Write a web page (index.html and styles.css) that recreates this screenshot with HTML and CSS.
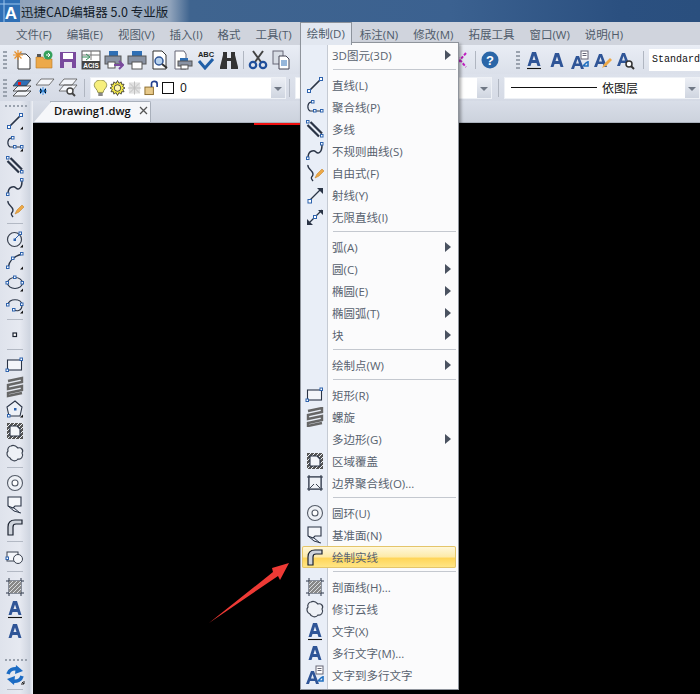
FILE: index.html
```html
<!DOCTYPE html>
<html lang="zh">
<head>
<meta charset="utf-8">
<title>迅捷CAD编辑器</title>
<link rel="stylesheet" href="styles.css">
</head>
<body>
<svg class="defs" width="0" height="0">
  <defs>
    <symbol id="tri" viewBox="0 0 20 20"><path d="M18 15.500V18.500H15Z" fill="#111"/></symbol>
    <symbol id="line" viewBox="0 0 20 20"><path d="M4 16 16 4" stroke="#2a3446" stroke-width="1.700"/><rect x="2.500" y="14.500" width="3" height="3" fill="#fff" stroke="#2d62ad"/><rect x="14.500" y="2.500" width="3" height="3" fill="#fff" stroke="#2d62ad"/></symbol>
    <symbol id="pline" viewBox="0 0 20 20"><path d="M6 5C2 6 2 12 5 14H16" fill="none" stroke="#2a3446" stroke-width="1.200"/><rect x="6.500" y="3.500" width="2.500" height="2.500" fill="#fff" stroke="#2d62ad"/><rect x="8.500" y="12.500" width="2.500" height="2.500" fill="#fff" stroke="#2d62ad"/><rect x="15.500" y="12.500" width="2.500" height="2.500" fill="#fff" stroke="#2d62ad"/></symbol>
    <symbol id="mline" viewBox="0 0 20 20"><path d="M2.500 6 14 17.500M5.500 3 17 14.500" stroke="#2a3446" stroke-width="2.200"/><rect x="1.500" y="1.500" width="2.500" height="2.500" fill="#fff" stroke="#2d62ad"/><rect x="15.500" y="15.500" width="2.500" height="2.500" fill="#fff" stroke="#2d62ad"/></symbol>
    <symbol id="spline" viewBox="0 0 20 20"><path d="M3 17C3 9 9 9 11 11S17 12 17 4" fill="none" stroke="#2a3446" stroke-width="1.500"/><rect x="1.500" y="16" width="2.500" height="2.500" fill="#fff" stroke="#2d62ad"/><rect x="15.500" y="1.500" width="2.500" height="2.500" fill="#fff" stroke="#2d62ad"/></symbol>
    <symbol id="free" viewBox="0 0 20 20"><path d="M3 2C2 6 8 7 8 11S4 13 8 18" fill="none" stroke="#2a3446" stroke-width="1.400"/><path d="M10 15 12 11 17 6 19 8 14 13Z" fill="#eda846" stroke="#c8862a" stroke-width=".6"/></symbol>
    <symbol id="ray" viewBox="0 0 20 20"><path d="M5 15 15 5" stroke="#2a3446" stroke-width="1.300"/><path d="M12 3H18V9Z" fill="#2a3446"/><rect x="3" y="14.500" width="3.500" height="3.500" fill="#fff" stroke="#2d62ad"/></symbol>
    <symbol id="xline" viewBox="0 0 20 20"><path d="M3 17 17 3" stroke="#2a3446" stroke-width="1.200"/><path d="M13 3H18V8ZM2 12V18H8Z" fill="#2a3446"/><rect x="8.500" y="8.500" width="3" height="3" fill="#fff" stroke="#2d62ad"/></symbol>
    <symbol id="circle" viewBox="0 0 20 20"><circle cx="9.500" cy="10.500" r="7" fill="#e8edf5" stroke="#3a4250" stroke-width="1.200"/><path d="M9.500 10.500 15 5" stroke="#2d62ad"/><rect x="8.500" y="9.500" width="2.500" height="2.500" fill="#2d62ad"/><rect x="14" y="3" width="2.500" height="2.500" fill="#fff" stroke="#2d62ad"/></symbol>
    <symbol id="arc" viewBox="0 0 20 20"><path d="M3 17C4 9 9 5 17 3" fill="none" stroke="#2a3446" stroke-width="1.300"/><rect x="1.500" y="15" width="2.500" height="2.500" fill="#fff" stroke="#2d62ad"/><rect x="6.500" y="6" width="2.500" height="2.500" fill="#fff" stroke="#2d62ad"/><rect x="15.500" y="1.500" width="2.500" height="2.500" fill="#fff" stroke="#2d62ad"/></symbol>
    <symbol id="ell" viewBox="0 0 20 20"><ellipse cx="10" cy="10" rx="7.500" ry="5.500" fill="none" stroke="#2a3446" stroke-width="1.200"/><rect x="1" y="8.500" width="2.500" height="2.500" fill="#fff" stroke="#2d62ad"/><rect x="16" y="8.500" width="2.500" height="2.500" fill="#fff" stroke="#2d62ad"/><rect x="8.500" y="3" width="2.500" height="2.500" fill="#fff" stroke="#2d62ad"/></symbol>
    <symbol id="ellarc" viewBox="0 0 20 20"><path d="M3 10C3 3 17 3 17 10S11 16 9 15" fill="none" stroke="#2a3446" stroke-width="1.200"/><rect x="1.500" y="8.500" width="2.500" height="2.500" fill="#fff" stroke="#2d62ad"/><rect x="15.500" y="8" width="2.500" height="2.500" fill="#fff" stroke="#2d62ad"/><rect x="7.500" y="13.500" width="2.500" height="2.500" fill="#fff" stroke="#2d62ad"/></symbol>
    <symbol id="point" viewBox="0 0 20 20"><rect x="8" y="8" width="3.500" height="3.500" fill="#fff" stroke="#1b2230" stroke-width="1.200"/></symbol>
    <symbol id="rect" viewBox="0 0 20 20"><rect x="2.500" y="5" width="14" height="10" fill="#f4f6fa" stroke="#2a3446" stroke-width="1.100"/><rect x="1" y="14" width="2.500" height="2.500" fill="#fff" stroke="#2d62ad"/><rect x="15" y="3" width="2.500" height="2.500" fill="#fff" stroke="#2d62ad"/></symbol>
    <symbol id="helix" viewBox="0 0 20 20"><path d="M3 4 17 1V5L3 8V12L17 9V13L3 16V19L17 16" fill="none" stroke="#666" stroke-width="2.400"/></symbol>
    <symbol id="poly" viewBox="0 0 20 20"><path d="M10 2 17 8 15 17H4L2 8Z" fill="#edf0f6" stroke="#2a3446" stroke-width="1.100"/><rect x="2.500" y="15.500" width="2.500" height="2.500" fill="#fff" stroke="#2d62ad"/><rect x="9" y="9" width="2.500" height="2.500" fill="#2d62ad"/></symbol>
    <symbol id="wipe" viewBox="0 0 20 20"><rect x="2" y="2" width="16" height="16" fill="#555"/><path d="M2 6 6 2M2 10 10 2M2 14 14 2M2 18 18 2M6 18 18 6M10 18 18 10M14 18 18 14" stroke="#eef1f6" stroke-width="1"/><path d="M5 5H12L15 8V15H5Z" fill="#f4f6fa" stroke="#2a3446" stroke-width="1.100"/></symbol>
    <symbol id="bound" viewBox="0 0 20 20"><path d="M4 2V18M16 2V18M2 4H18M2 16H18" stroke="#3a4250" stroke-width="1.100"/><rect x="4" y="4" width="12" height="12" fill="#eef1f6" stroke="#2a3446" stroke-width="1.100"/><path d="M5 15 9 11M15 15 11 11" stroke="#3a4250"/></symbol>
    <symbol id="cloud" viewBox="0 0 20 20"><path d="M6 3C9 1 12 4 13 5 16 4 19 7 17 10 19 13 16 17 13 16 11 19 6 18 5 15 2 14 1 10 3 8 2 6 4 3 6 3Z" fill="#eef1f6" stroke="#3a4250" stroke-width="1.200"/></symbol>
    <symbol id="donut" viewBox="0 0 20 20"><circle cx="10" cy="10" r="7.500" fill="#eef1f6" stroke="#555c68" stroke-width="1.100"/><circle cx="10" cy="10" r="3" fill="#fff" stroke="#555c68" stroke-width="1.100"/></symbol>
    <symbol id="plane" viewBox="0 0 20 20"><path d="M3 2H16V11H10L8 13 3 11Z" fill="#f4f6fa" stroke="#2a3446" stroke-width="1.100"/><path d="M3 11 9 16 16 18M9 13 15 18" fill="none" stroke="#2a3446"/></symbol>
    <symbol id="solid" viewBox="0 0 20 20"><path d="M3 18V10C3 5 6 3 10 3H17V7H11C9 7 8 8 8 10V18Z" fill="#cfd4dc" stroke="#1b2230" stroke-width="1.200"/></symbol>
    <symbol id="region" viewBox="0 0 20 20"><rect x="2" y="5" width="11" height="9" fill="#f4f6fa" stroke="#3a4250"/><circle cx="13" cy="12" r="4.500" fill="#f4f6fa" stroke="#3a4250"/><rect x="1" y="10" width="2.500" height="2.500" fill="#fff" stroke="#2d62ad"/></symbol>
    <symbol id="hatch" viewBox="0 0 20 20"><path d="M4 1V19M16 1V19M1 4H19M1 16H19" stroke="#2a3446"/><rect x="4" y="4" width="12" height="12" fill="#888"/><path d="M4 8 8 4M4 12 12 4M4 16 16 4M8 16 16 8M12 16 16 12" stroke="#eef1f6" stroke-width=".8"/></symbol>
    <symbol id="au" viewBox="0 0 20 20"><path d="M3.500 16 8 2H12L16.500 16H13.500L12.500 13H7.500L6.500 16ZM8.500 10H11.500L10 5.500Z" fill="#2f5597"/><path d="M3 18.500H17" stroke="#111" stroke-width="1.100"/></symbol>
    <symbol id="a" viewBox="0 0 20 20"><path d="M3.500 17 8 3H12L16.500 17H13.500L12.500 14H7.500L6.500 17ZM8.500 11H11.500L10 6.500Z" fill="#2f5597"/></symbol>
    <symbol id="am" viewBox="0 0 20 20"><path d="M1 19 6 6H9L14 19H11L10 16H5L4 19ZM6 13.500H9L7.500 9Z" fill="#2f5597"/><rect x="11" y="1" width="7" height="8" fill="#fff" stroke="#667"/><path d="M12.500 3.500H16.500M12.500 5.500H16.500" stroke="#667"/><path d="M18 11V16H13M17 12 13 16" fill="none" stroke="#1f6fc0" stroke-width="1.600"/></symbol>
    <symbol id="apen" viewBox="0 0 20 20"><path d="M1 17 6 4H9L14 17H11L10 14H5L4 17ZM6 11.500H9L7.500 7Z" fill="#2f5597"/><path d="M9 18 11 14 17 8 19 10 13 16Z" fill="#eda846"/></symbol>
    <symbol id="afind" viewBox="0 0 20 20"><path d="M1 16 6 3H9L14 16H11L10 13H5L4 16ZM6 10.500H9L7.500 6Z" fill="#2f5597"/><circle cx="13" cy="14" r="3" fill="#fff" stroke="#333" stroke-width="1.500"/><path d="M15 16 18 19" stroke="#333" stroke-width="2"/></symbol>
    <symbol id="sync" viewBox="0 0 20 20"><path d="M3 9C4 5 8 3 13 4" fill="none" stroke="#1c6cc4" stroke-width="3.600"/><path d="M11 0 18 6 10 9Z" fill="#1c6cc4"/><path d="M17 11C16 15 12 17 7 16" fill="none" stroke="#1c6cc4" stroke-width="3.600"/><path d="M9 20 2 14 10 11Z" fill="#1c6cc4"/><path d="M17 17 19 19M16 19H19V16" stroke="#222" fill="none"/></symbol>
    <symbol id="new" viewBox="0 0 20 20"><path d="M6 4H14L18 8V19H6Z" fill="#fff" stroke="#333"/><path d="M6 0V10M1 5H11M2.500 1.500 9.500 8.500M9.500 1.500 2.500 8.500" stroke="#e8912d" stroke-width="1.200"/></symbol>
    <symbol id="open" viewBox="0 0 20 20"><path d="M1 7H8L9 9H17V18H1Z" fill="#eca94a" stroke="#b87a25" stroke-width=".6"/><path d="M2 4H6V7H2Z" fill="#555"/><circle cx="13" cy="5" r="4.500" fill="#35a05c"/><path d="M11 5H15M13 3 15 5 13 7" stroke="#fff" fill="none"/></symbol>
    <symbol id="save" viewBox="0 0 20 20"><rect x="2" y="2" width="16" height="16" fill="#7a4a9e"/><rect x="5" y="3" width="10" height="6" fill="#fff"/><rect x="6" y="12" width="8" height="6" fill="#e6e0ee"/></symbol>
    <symbol id="acis" viewBox="0 0 20 20"><rect x="1" y="1" width="18" height="18" fill="#fff" stroke="#555"/><path d="M1 5H19M10 1V10" stroke="#777"/><path d="M1 7H8M5 4 9 7 5 10" stroke="#2e8b57" fill="none"/><rect x="1" y="11" width="18" height="8" fill="#444"/><text x="10" y="17.500" font-family="Liberation Sans" font-size="6.500" font-weight="700" text-anchor="middle" fill="#fff">ACIS</text></symbol>
    <symbol id="printto" viewBox="0 0 20 20"><rect x="5" y="1" width="9" height="5" fill="#2f6fb5"/><rect x="1" y="6" width="16" height="8" fill="#8a93a3" stroke="#555"/><rect x="4" y="12" width="7" height="6" fill="#fff" stroke="#555"/><path d="M10 15H19M15 11 19 15 15 19" fill="none" stroke="#7a4a9e" stroke-width="2"/></symbol>
    <symbol id="print" viewBox="0 0 20 20"><rect x="5" y="1" width="10" height="5" fill="#2f6fb5"/><rect x="1" y="6" width="18" height="8" fill="#8a93a3" stroke="#555"/><rect x="5" y="12" width="10" height="7" fill="#fff" stroke="#555"/></symbol>
    <symbol id="preview" viewBox="0 0 20 20"><path d="M3 1H12L16 5V19H3Z" fill="#fff" stroke="#333"/><circle cx="9" cy="11" r="4" fill="#b9d3ee" stroke="#2f5597" stroke-width="1.500"/><path d="M12 14 17 18" stroke="#333" stroke-width="2"/></symbol>
    <symbol id="plot" viewBox="0 0 20 20"><path d="M2 1H11L13 4V19H2Z" fill="#fff" stroke="#667"/><rect x="7" y="8" width="8" height="3" fill="#2f6fb5"/><rect x="5" y="11" width="14" height="5" fill="#8a93a3" stroke="#555"/><rect x="8" y="15" width="7" height="4" fill="#fff" stroke="#555"/></symbol>
    <symbol id="check" viewBox="0 0 20 20"><text x="10" y="7" font-family="Liberation Sans" font-size="7.500" font-weight="700" text-anchor="middle" fill="#222">ABC</text><path d="M3 11 9 18 17 9" fill="none" stroke="#1f5fa8" stroke-width="3"/></symbol>
    <symbol id="binoc" viewBox="0 0 20 20"><path d="M4 2H8V8H12V2H16V5L19 17V19H12V11H8V19H1V17L4 5Z" fill="#333"/></symbol>
    <symbol id="cut" viewBox="0 0 20 20"><path d="M5 1 13 12M15 1 7 12" stroke="#444" stroke-width="2"/><circle cx="5" cy="15" r="3.200" fill="none" stroke="#1f4f9c" stroke-width="2.200"/><circle cx="15" cy="15" r="3.200" fill="none" stroke="#1f4f9c" stroke-width="2.200"/></symbol>
    <symbol id="copy" viewBox="0 0 20 20"><rect x="2" y="1" width="10" height="13" fill="#d8dde5" stroke="#667"/><path d="M8 6H15L18 9V19H8Z" fill="#fff" stroke="#445"/><path d="M10 11H16M10 13H16M10 15H16" stroke="#2f6fb5"/></symbol>
    <symbol id="help" viewBox="0 0 20 20"><circle cx="10" cy="10" r="8.500" fill="#2a66a8"/><text x="10" y="14.500" font-family="Liberation Sans" font-size="13" font-weight="700" text-anchor="middle" fill="#fff">?</text></symbol>
    <symbol id="layer" viewBox="0 0 20 20"><path d="M6 2H19L14 8H1Z" fill="#2f6fb5" stroke="#333" stroke-width=".7"/><rect x="6" y="4" width="3" height="3" fill="#e11"/><path d="M6 8H19L14 13H1ZM6 13H19L14 18H1Z" fill="#f4f6fa" stroke="#333" stroke-width=".8"/></symbol>
    <symbol id="layer2" viewBox="0 0 20 20"><path d="M6 1H19L14 7H1Z" fill="#f4f6fa" stroke="#555" stroke-width=".8"/><path d="M5 10 8 13 5 16M11 10 8 13 11 16M8 9V17M4 13H12" stroke="#3c8fe0"/></symbol>
    <symbol id="layer3" viewBox="0 0 20 20"><path d="M6 1H19L14 7H1ZM6 7H19L14 13H1Z" fill="#f4f6fa" stroke="#555" stroke-width=".8"/><circle cx="12" cy="13" r="3" fill="#fff" stroke="#444" stroke-width="1.400"/><path d="M14 15 17 18" stroke="#444" stroke-width="2"/></symbol>
    <symbol id="bulb" viewBox="0 0 16 18"><path d="M8 0C3.500 0 1 3 1 6 1 9 5 11 5 14H11C11 11 15 9 15 6 15 3 12.500 0 8 0Z" fill="#f7ef7c" stroke="#8b8b44"/><rect x="5.500" y="14.500" width="5" height="3.500" fill="#888"/></symbol>
    <symbol id="sun" viewBox="0 0 16 16"><path d="M8 0 9.500 3 12 1.500 12.300 4 15 4 13.500 6.500 16 8 13.500 9.500 15 12 12.300 12 12 14.500 9.500 13 8 16 6.500 13 4 14.500 3.700 12 1 12 2.500 9.500 0 8 2.500 6.500 1 4 3.700 4 4 1.500 6.500 3Z" fill="#f9ee4a" stroke="#222" stroke-width=".8"/><circle cx="8" cy="8" r="3.500" fill="#fff8b0" stroke="#222" stroke-width=".8"/></symbol>
    <symbol id="freeze" viewBox="0 0 16 16"><rect x="2" y="2" width="12" height="12" fill="#e2e2e2"/><path d="M8 1V15M1 8H15M3 3 13 13M13 3 3 13" stroke="#bdbdbd"/></symbol>
    <symbol id="lock" viewBox="0 0 16 16"><rect x="1" y="7" width="9" height="8" fill="#e7c98a" stroke="#8a6a2a"/><path d="M8 7V3.500C8 0 14 0 14 3.500V7" fill="none" stroke="#23408f" stroke-width="1.800"/></symbol>
    <symbol id="trim" viewBox="0 0 14 20"><path d="M1 3 13 17M13 3 1 17" stroke="#c01fc0" stroke-width="2" stroke-dasharray="3 1.500"/></symbol>
  </defs>
</svg>

<div class="app">
  <header class="titlebar">
    <svg class="logo" viewBox="0 0 20 22"><rect width="20" height="22" fill="#2f6fb5"/><path d="M0 4H20M4 0V22" stroke="#9cc6ee"/><text x="11" y="19" font-family="Liberation Sans" font-size="17" font-weight="700" text-anchor="middle" fill="#fff">A</text></svg>
    <span class="apptitle">迅捷CAD编辑器 5.0 专业版</span>
  </header>

  <nav class="menubar">
    <span>文件(F)</span><span>编辑(E)</span><span>视图(V)</span><span>插入(I)</span><span>格式</span><span>工具(T)</span><span class="open">绘制(D)</span><span>标注(N)</span><span>修改(M)</span><span>拓展工具</span><span>窗口(W)</span><span>说明(H)</span>
  </nav>

  <div class="toolbar tb1">
    <i class="grip"></i>
    <svg class="ti"><use href="#new"/></svg><svg class="ti"><use href="#open"/></svg><svg class="ti"><use href="#save"/></svg><svg class="ti"><use href="#acis"/></svg><svg class="ti"><use href="#printto"/></svg><svg class="ti"><use href="#print"/></svg><svg class="ti"><use href="#preview"/></svg><svg class="ti"><use href="#plot"/></svg><svg class="ti"><use href="#check"/></svg><svg class="ti"><use href="#binoc"/></svg>
    <i class="vsep"></i>
    <svg class="ti"><use href="#cut"/></svg><svg class="ti"><use href="#copy"/></svg>
    <span class="spacer1"></span>
    <svg class="trim"><use href="#trim"/></svg>
    <i class="vsep"></i>
    <svg class="ti"><use href="#help"/></svg>
    <i class="grip gripb"></i>
    <svg class="ti"><use href="#au"/></svg><svg class="ti"><use href="#a"/></svg><svg class="ti"><use href="#am"/></svg><svg class="ti"><use href="#apen"/></svg><svg class="ti"><use href="#afind"/></svg>
    <i class="vsep vsep-last"></i>
    <span class="stylebox">Standard</span>
  </div>

  <div class="toolbar tb2">
    <i class="grip"></i>
    <svg class="ti"><use href="#layer"/></svg><svg class="ti"><use href="#layer2"/></svg><svg class="ti"><use href="#layer3"/></svg>
    <i class="vsep"></i>
    <div class="combo layercombo">
      <svg class="si"><use href="#bulb"/></svg><svg class="si"><use href="#sun"/></svg><svg class="si"><use href="#freeze"/></svg><svg class="si"><use href="#lock"/></svg><b class="swatch"></b><span class="lname">0</span>
      <b class="drop"></b>
    </div>
    <i class="vsep"></i>
    <div class="combo colorcombo"><b class="drop"></b></div>
    <i class="vsep"></i>
    <div class="combo linecombo"><i class="ltline"></i><span class="ltname">依图层</span><b class="drop"></b></div>
  </div>

  <div class="body">
    <aside class="lefttb">
      <div class="lgrip lgrip-top"></div>
      <svg class="li"><use href="#line"/><use href="#tri"/></svg>
      <svg class="li"><use href="#pline"/><use href="#tri"/></svg>
      <svg class="li"><use href="#mline"/></svg>
      <svg class="li"><use href="#spline"/></svg>
      <svg class="li"><use href="#free"/></svg>
      <i class="hsep"></i>
      <svg class="li"><use href="#circle"/><use href="#tri"/></svg>
      <svg class="li"><use href="#arc"/><use href="#tri"/></svg>
      <svg class="li"><use href="#ell"/><use href="#tri"/></svg>
      <svg class="li"><use href="#ellarc"/><use href="#tri"/></svg>
      <i class="hsep"></i>
      <svg class="li"><use href="#point"/></svg>
      <i class="hsep"></i>
      <svg class="li"><use href="#rect"/></svg>
      <svg class="li"><use href="#helix"/></svg>
      <svg class="li"><use href="#poly"/><use href="#tri"/></svg>
      <svg class="li"><use href="#wipe"/></svg>
      <svg class="li"><use href="#cloud"/></svg>
      <i class="hsep"></i>
      <svg class="li"><use href="#donut"/></svg>
      <svg class="li"><use href="#plane"/></svg>
      <svg class="li"><use href="#solid"/></svg>
      <i class="hsep"></i>
      <svg class="li"><use href="#region"/></svg>
      <i class="hsep"></i>
      <svg class="li"><use href="#hatch"/></svg>
      <svg class="li"><use href="#au"/></svg>
      <svg class="li"><use href="#a"/></svg>
      <div class="lgrip lgrip-mid"></div>
      <svg class="li"><use href="#sync"/></svg>
      <i class="hsep"></i>
    </aside>
    <div class="work">
      <div class="tabrow">
        <div class="tab"><span>Drawing1.dwg</span><svg class="tabx" viewBox="0 0 9 9"><path d="M1 1 8 8M8 1 1 8" stroke="#555" stroke-width="1.300"/></svg></div>
      </div>
      <main class="canvas"></main>
    </div>
  </div>

  <i class="redmark"></i>

  <div class="menu">
    <div class="mi sub"><span>3D图元(3D)</span></div>
    <hr>
    <div class="mi"><svg><use href="#line"/></svg><span>直线(L)</span></div>
    <div class="mi"><svg><use href="#pline"/></svg><span>聚合线(P)</span></div>
    <div class="mi"><svg><use href="#mline"/></svg><span>多线</span></div>
    <div class="mi"><svg><use href="#spline"/></svg><span>不规则曲线(S)</span></div>
    <div class="mi"><svg><use href="#free"/></svg><span>自由式(F)</span></div>
    <div class="mi"><svg><use href="#ray"/></svg><span>射线(Y)</span></div>
    <div class="mi"><svg><use href="#xline"/></svg><span>无限直线(I)</span></div>
    <hr>
    <div class="mi sub"><span>弧(A)</span></div>
    <div class="mi sub"><span>圆(C)</span></div>
    <div class="mi sub"><span>椭圆(E)</span></div>
    <div class="mi sub"><span>椭圆弧(T)</span></div>
    <div class="mi sub"><span>块</span></div>
    <hr>
    <div class="mi sub"><span>绘制点(W)</span></div>
    <hr>
    <div class="mi"><svg><use href="#rect"/></svg><span>矩形(R)</span></div>
    <div class="mi"><svg><use href="#helix"/></svg><span>螺旋</span></div>
    <div class="mi sub"><span>多边形(G)</span></div>
    <div class="mi"><svg><use href="#wipe"/></svg><span>区域覆盖</span></div>
    <div class="mi"><svg><use href="#bound"/></svg><span>边界聚合线(O)...</span></div>
    <hr>
    <div class="mi"><svg><use href="#donut"/></svg><span>圆环(U)</span></div>
    <div class="mi"><svg><use href="#plane"/></svg><span>基准面(N)</span></div>
    <div class="mi active"><svg><use href="#solid"/></svg><span>绘制实线</span></div>
    <hr>
    <div class="mi"><svg><use href="#hatch"/></svg><span>剖面线(H)...</span></div>
    <div class="mi"><svg><use href="#cloud"/></svg><span>修订云线</span></div>
    <div class="mi"><svg><use href="#au"/></svg><span>文字(X)</span></div>
    <div class="mi"><svg><use href="#a"/></svg><span>多行文字(M)...</span></div>
    <div class="mi"><svg><use href="#am"/></svg><span>文字到多行文字</span></div>
  </div>

  <svg class="callout" viewBox="0 0 90 70"><path d="M0 68 64 17 63 13 80 8 71 25 69 21Z" fill="#ee3a35"/></svg>
</div>
</body>
</html>
```

FILE: styles.css
```css
* { box-sizing: border-box; }
html, body { margin: 0; padding: 0; }
body { width: 700px; height: 694px; overflow: hidden; font-family: "Open Sans", "Noto Sans CJK SC", sans-serif; font-size: 12px; color: #4d5866; }
.defs { position: absolute; }
.app { position: relative; width: 700px; height: 694px; overflow: hidden; background: #d3d8e2; display: flex; flex-direction: column; }

.titlebar { height: 22px; display: flex; align-items: center; background: linear-gradient(90deg, #8c9fb8 0, #a9b6c8 100px, #90a3bb 170px, #3f648f 190px, #3b6190 450px, #2b5080 620px, #2a4f7e 700px); flex: none; }
.logo { width: 20px; height: 22px; flex: none; }
.apptitle { margin-left: 1px; font-family: "Noto Sans CJK SC", sans-serif; font-size: 12.500px; color: #111a26; white-space: nowrap; }

.menubar { height: 23px; flex: none; display: flex; align-items: center; gap: 15px; padding-left: 16px; background: #d0d4dd; font-size: 11.500px; color: #4f5b6a; white-space: nowrap; }
.menubar .open { position: relative; z-index: 2; margin: 0 -7px; padding: 0 7px; height: 23px; line-height: 23px; background: #e2e7f0; box-shadow: inset 1px 1px 0 #8d939c, inset -1px 0 0 #8d939c; }

.toolbar { display: flex; align-items: center; flex: none; overflow: hidden; }
.tb1 { height: 29px; padding-left: 3px; background: linear-gradient(#e9edf5, #dbe0ea); }
.tb2 { height: 27px; padding-left: 3px; background: linear-gradient(#dde2ec, #d5dae5); }
.grip { width: 4px; height: 18px; flex: none; margin-right: 5px; background: repeating-linear-gradient(#9aa2ae 0 2px, transparent 2px 4px); }
.gripb { margin-left: 13px; margin-right: 4px; }
.ti { width: 20px; height: 20px; flex: none; margin-right: 3px; }
.vsep { width: 1px; height: 18px; flex: none; background: #b0b6c1; margin: 0 5px 0 3px; }
.tb1 .vsep { margin: 0 4px 0 1px; }
.tb1 .vsep-last { margin: 0 5px 0 4px; }
.spacer1 { width: 159px; flex: none; }
.trim { width: 14px; height: 20px; flex: none; margin-right: 7px; }
.stylebox { width: 60px; height: 22px; line-height: 22px; flex: none; padding-left: 3px; background: #fff; font-family: "Liberation Mono", monospace; font-size: 10px; color: #111; overflow: hidden; white-space: nowrap; }

.combo { position: relative; height: 22px; background: #fff; border: 1px solid #eef1f6; display: flex; align-items: center; flex: none; color: #111; }
.layercombo { width: 196px; padding-left: 2px; }
.colorcombo { width: 197px; margin-right: 3px; }
.linecombo { width: 196px; padding-left: 6px; }
.drop { position: absolute; right: 0; top: 0; bottom: 0; width: 14px; background: linear-gradient(#eceff5, #cfd5e0); }
.drop::after { content: ""; position: absolute; left: 3px; top: 9px; border: 4px solid transparent; border-top-color: #707885; border-bottom: 0; }
.si { width: 15px; height: 16px; flex: none; margin-right: 2px; }
.swatch { width: 12px; height: 12px; border: 1px solid #111; background: #fff; flex: none; margin-left: 1px; }
.lname { margin-left: 6px; font-size: 12px; }
.ltline { width: 86px; height: 1px; background: #111; flex: none; }
.ltname { margin-left: 5px; font-family: "Noto Sans CJK SC", sans-serif; font-size: 12px; }

.body { flex: 1; min-height: 0; display: flex; }
.lefttb { width: 33px; flex: none; display: flex; flex-direction: column; align-items: flex-start; padding-left: 5px; background: linear-gradient(90deg, #dfe3ec, #e6e9f1 60%, #cfd5e0 90%, #f0f2f7 100%); }
.li { width: 20px; height: 22px; flex: none; }
.hsep { width: 16px; height: 1px; flex: none; margin: 3px 0 4px 2px; background: #b3b9c4; }
.lgrip { flex: none; width: 22px; background-image: repeating-linear-gradient(90deg, #9aa2ae 0 2px, transparent 2px 4px); background-size: 100% 2px; background-repeat: no-repeat; }
.lgrip-top { height: 9px; background-position: 0 4px; }
.lgrip-mid { height: 22px; background-position: 0 17px; }

.work { flex: 1; min-width: 0; display: flex; flex-direction: column; }
.tabrow { height: 22px; flex: none; display: flex; align-items: flex-end; background: linear-gradient(#d9dee8, #ccd2dd); border-bottom: 1px solid #aab1bc; }
.tab { position: relative; margin-left: 17px; width: 101px; height: 21px; display: flex; align-items: center; padding: 0 0 3px 3px; background: #f6f7fa; border: 1px solid #a9b0bb; border-bottom: 0; border-radius: 0 2px 0 0; font-family: "Open Sans", sans-serif; font-weight: 600; font-size: 11.200px; color: #111; white-space: nowrap; }
.tab::before { content: ""; position: absolute; left: -17px; bottom: 0; border-left: 17px solid transparent; border-bottom: 20px solid #f6f7fa; }
.tabx { width: 9px; height: 9px; margin-left: 8px; flex: none; }
.canvas { flex: 1; background: #000; }

.redmark { position: absolute; left: 254px; top: 123px; width: 50px; height: 2px; background: #f01010; }

.menu { position: absolute; left: 300px; top: 42px; width: 159px; height: 648px; padding: 1px 2px 0 1px; background: linear-gradient(90deg, #e9eef7 0, #e9eef7 26px, #c5cad3 26px, #c5cad3 27px, #fbfbfc 27px); border: 1px solid #8f949c; box-shadow: 2px 2px 3px rgba(0, 0, 0, .35); font-size: 11.500px; color: #58626f; }
.mi { position: relative; height: 22px; display: flex; align-items: center; padding-left: 30px; white-space: nowrap; }
.mi svg { position: absolute; left: 3px; top: 1px; width: 20px; height: 20px; }
.mi.sub::after { content: ""; position: absolute; right: 5px; top: 6px; border-left: 6px solid #4a5260; border-top: 5px solid transparent; border-bottom: 5px solid transparent; }
.mi.active { background: linear-gradient(#fff9e0 0, #fdeaa8 50%, #ffd558 55%, #ffe78a 100%); box-shadow: inset 0 0 0 1px #e4c56a; border-radius: 2px; }
.menu hr { height: 1px; margin: 3px 0 4px 31px; border: 0; background: #c4c8cf; }

.callout { position: absolute; left: 209px; top: 555px; width: 90px; height: 70px; }
```
